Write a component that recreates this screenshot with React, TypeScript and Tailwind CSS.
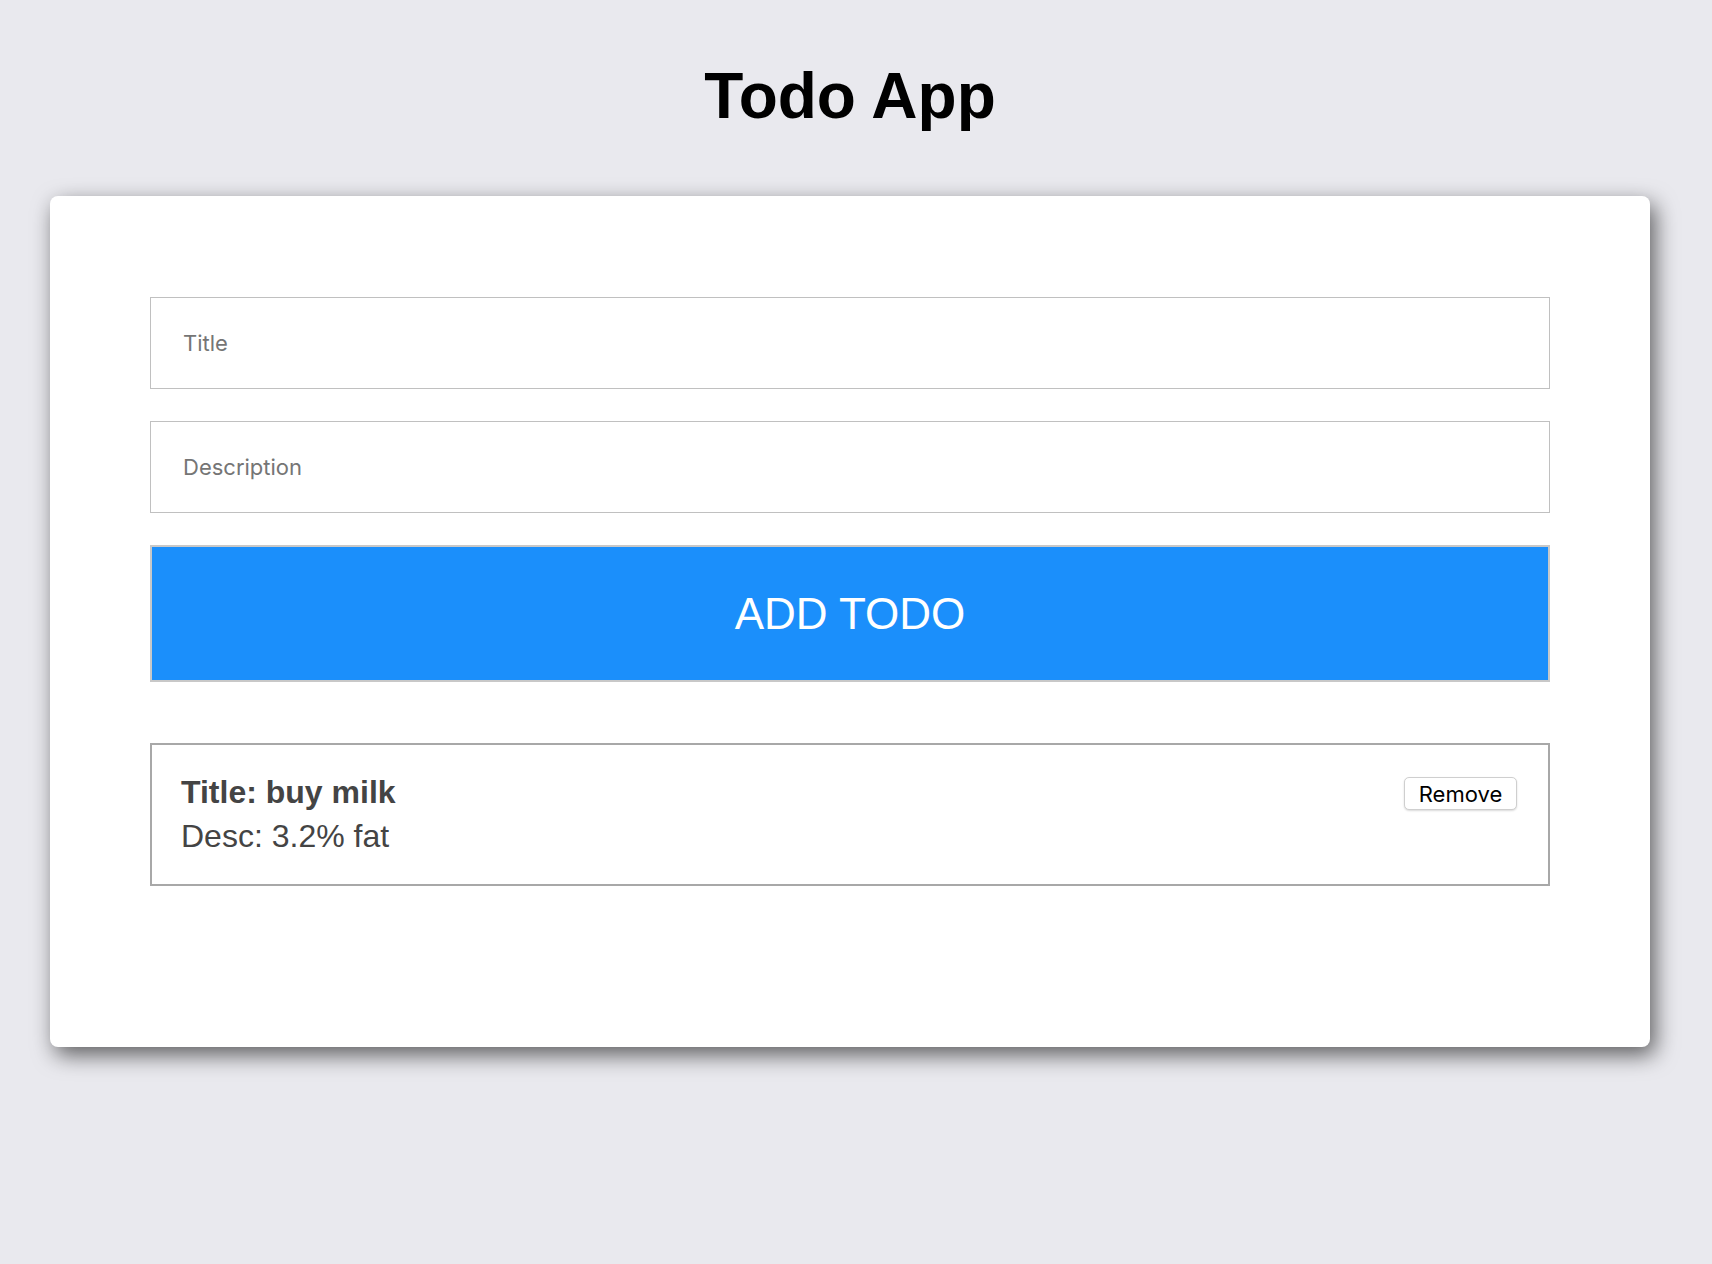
import { useState } from "react";

interface Todo {
  id: number;
  title: string;
  desc: string;
}

export default function App() {
  const [title, setTitle] = useState("");
  const [desc, setDesc] = useState("");
  const [todos, setTodos] = useState<Todo[]>([
    { id: 1, title: "buy milk", desc: "3.2% fat" },
  ]);

  const addTodo = () => {
    if (!title.trim()) return;
    setTodos([...todos, { id: Date.now(), title, desc }]);
    setTitle("");
    setDesc("");
  };

  return (
    <div className="min-h-screen bg-[#e9e9ee] pt-[64px] pb-10 font-['Liberation_Sans',Arial,sans-serif]">
      <h1 className="w-[1700px] text-center text-[64px] leading-none font-bold text-black">
        Todo App
      </h1>

      <div className="ml-[50px] mt-[68px] w-[1600px] bg-white rounded-lg shadow-[5px_8px_22px_rgba(0,0,0,0.6)] px-[100px] pt-[101px] pb-[161px]">
        <input
          value={title}
          onChange={(e) => setTitle(e.target.value)}
          placeholder="Title"
          className="block w-full h-[92px] border border-[#c0c0c0] px-[32px] text-[22px] text-[#333] placeholder:text-[#757575] outline-none font-['Inter',sans-serif]"
        />
        <input
          value={desc}
          onChange={(e) => setDesc(e.target.value)}
          placeholder="Description"
          className="block w-full h-[92px] mt-[32px] border border-[#c0c0c0] px-[32px] text-[22px] text-[#333] placeholder:text-[#757575] outline-none font-['Inter',sans-serif]"
        />
        <button
          onClick={addTodo}
          className="block w-full h-[137px] mt-[32px] bg-[#1b8ffb] border-2 border-[#c8c8c8] text-white text-[44px] leading-none"
        >
          ADD TODO
        </button>

        <div className="mt-[61px] flex flex-col gap-4">
          {todos.map((t) => (
            <div
              key={t.id}
              className="flex items-start justify-between border-2 border-[#a8a8a8] pl-[29px] pr-[31px] pt-[25px] pb-[26px]"
            >
              <div className="text-[32px] leading-[44px] text-[#444]">
                <div className="font-bold">Title: {t.title}</div>
                <div>Desc: {t.desc}</div>
              </div>
              <button
                onClick={() => setTodos(todos.filter((x) => x.id !== t.id))}
                className="mt-[7px] w-[113px] h-[33px] rounded-[5px] border border-[#cfcfcf] bg-white shadow-[0_1px_2px_rgba(0,0,0,0.15)] text-[22px] leading-none text-black font-['Inter',sans-serif]"
              >
                Remove
              </button>
            </div>
          ))}
        </div>
      </div>
    </div>
  );
}
